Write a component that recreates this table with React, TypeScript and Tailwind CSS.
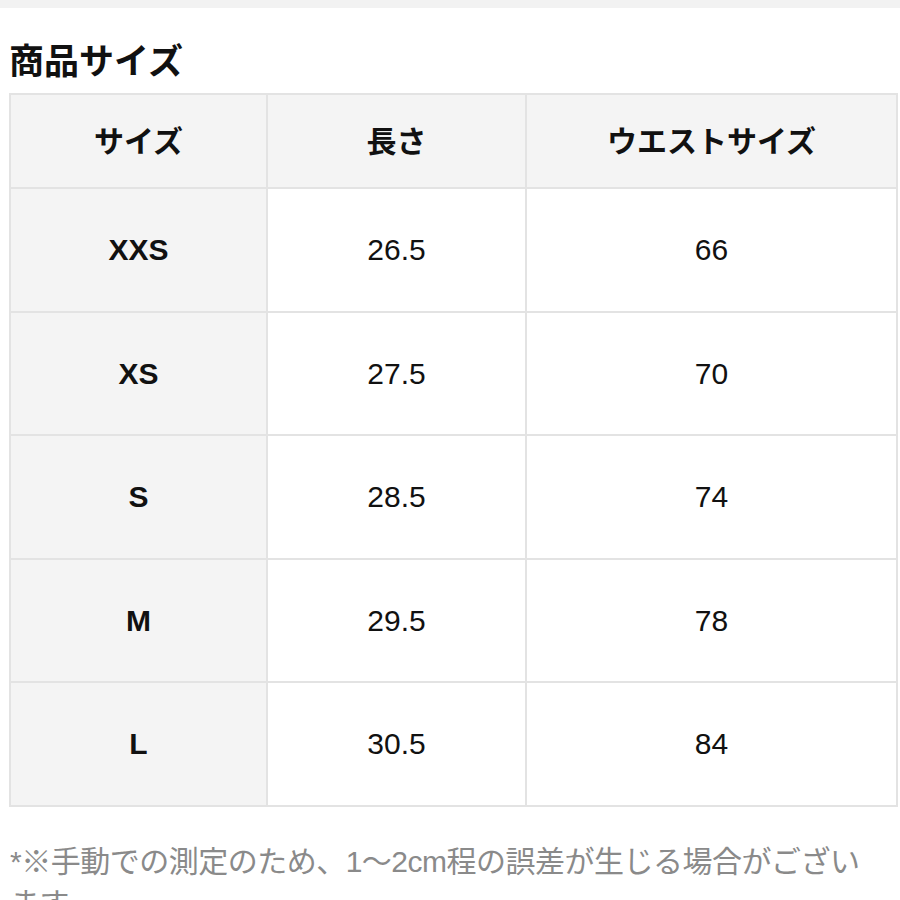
const rows = [
  { size: "XXS", length: "26.5", waist: "66" },
  { size: "XS", length: "27.5", waist: "70" },
  { size: "S", length: "28.5", waist: "74" },
  { size: "M", length: "29.5", waist: "78" },
  { size: "L", length: "30.5", waist: "84" },
];

export default function App() {
  return (
    <div
      className="w-[900px] h-[900px] overflow-hidden bg-white text-[#111]"
      style={{ fontFamily: '"Liberation Sans", "Noto Sans CJK JP", sans-serif' }}
    >
      <div className="h-[8px] bg-[#f2f2f2]" />
      <h2 className="pl-[9px] pt-[29px] text-[35px] font-bold leading-[50px]">
        商品サイズ
      </h2>
      <div className="pl-[9px] pr-[2px] pt-[6px]">
        <table className="w-[889px] table-fixed border-collapse">
          <colgroup>
            <col className="w-[257px]" />
            <col className="w-[259px]" />
            <col />
          </colgroup>
          <thead>
            <tr className="h-[94px] bg-[#f4f4f4]">
              {["サイズ", "長さ", "ウエストサイズ"].map((h) => (
                <th
                  key={h}
                  className="border-2 border-[#e3e3e3] text-center text-[30px] font-bold"
                >
                  {h}
                </th>
              ))}
            </tr>
          </thead>
          <tbody>
            {rows.map((r) => (
              <tr key={r.size} className="h-[123.5px]">
                <td className="border-2 border-[#e3e3e3] bg-[#f4f4f4] text-center text-[30px] font-bold">
                  {r.size}
                </td>
                <td className="border-2 border-[#e3e3e3] text-center text-[30px]">
                  {r.length}
                </td>
                <td className="border-2 border-[#e3e3e3] text-center text-[30px]">
                  {r.waist}
                </td>
              </tr>
            ))}
          </tbody>
        </table>
      </div>
      <p className="w-[880px] pl-[10px] pt-[34px] text-[30px] leading-[42px] tracking-[-0.5px] text-[#8a8a8a]">
        *※手動での測定のため、1～2cm程の誤差が生じる場合がございます。
      </p>
    </div>
  );
}
